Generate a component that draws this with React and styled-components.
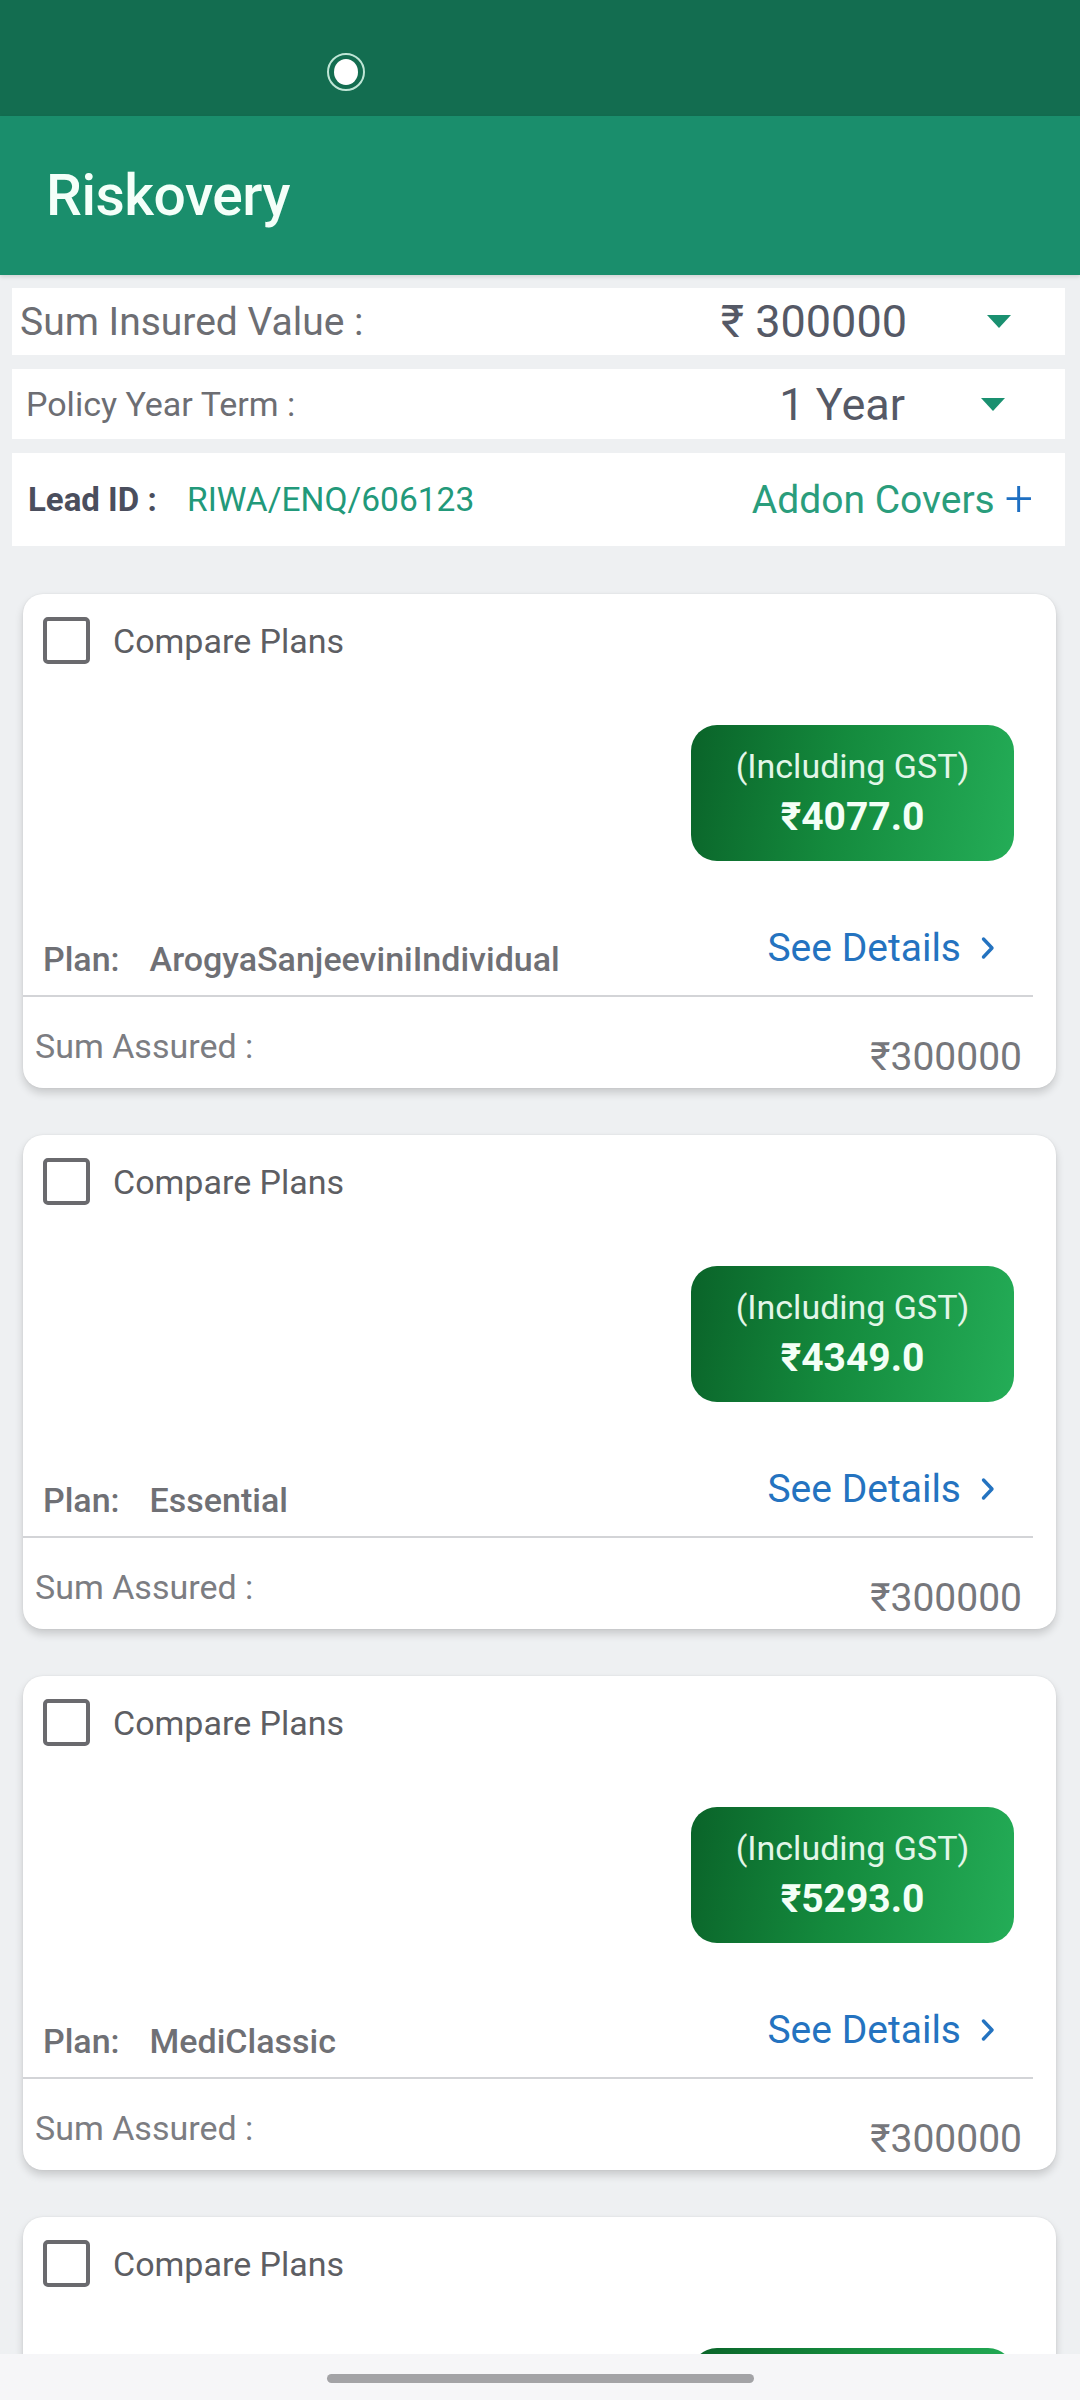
import React from "react";
import styled, { createGlobalStyle } from "styled-components";

const Global = createGlobalStyle`
  html, body { margin: 0; padding: 0; }
  body { background: #eef0f2; font-family: Roboto, "Noto Sans", "DejaVu Sans", sans-serif; }
  * { box-sizing: border-box; }
`;

const Screen = styled.div`
  width: 1080px;
  height: 2400px;
  display: flex;
  flex-direction: column;
  overflow: hidden;
  background: #eef0f2;
`;

const StatusBar = styled.div`
  height: 116px;
  flex: none;
  background: #136d50;
  display: flex;
  align-items: flex-start;
  padding: 53px 0 0 327px;
`;

const RecDot = styled.div`
  width: 38px;
  height: 38px;
  border-radius: 50%;
  border: 2px solid #bfe6d6;
  display: flex;
  align-items: center;
  justify-content: center;
  &::after {
    content: "";
    width: 24px;
    height: 26px;
    border-radius: 50%;
    background: #ffffff;
  }
`;

const AppBar = styled.div`
  height: 159px;
  flex: none;
  background: #1a8e6c;
  display: flex;
  align-items: center;
  padding-left: 46px;
  box-shadow: 0 2px 4px rgba(0, 0, 0, 0.12);
`;

const Title = styled.h1`
  margin: 0;
  color: #f4fff9;
  font-size: 57px;
  font-weight: 500;
  letter-spacing: -0.5px;
`;

const Content = styled.div`
  flex: 1;
  min-height: 0;
  overflow: hidden;
  padding: 13px 15px 0 12px;
  display: flex;
  flex-direction: column;
`;

const FilterRow = styled.div`
  flex: none;
  height: ${(p) => p.$h}px;
  margin-bottom: 14px;
  background: #fff;
  display: flex;
  align-items: center;
  padding-left: ${(p) => p.$pl}px;
  padding-right: ${(p) => p.$pr}px;
`;

const FilterLabel = styled.span`
  color: #6d6e73;
  font-size: ${(p) => p.$size}px;
  flex: 1;
`;

const FilterValue = styled.span`
  color: #555966;
  font-size: 45px;
  margin-right: ${(p) => p.$mr}px;
`;

const Caret = styled.span`
  width: 0;
  height: 0;
  border-left: 12px solid transparent;
  border-right: 12px solid transparent;
  border-top: 13px solid #1a9070;
`;

const LeadRow = styled.div`
  flex: none;
  height: 93px;
  background: #fff;
  display: flex;
  align-items: center;
  padding: 0 32px 0 16px;
  margin-bottom: 48px;
`;

const LeadLabel = styled.span`
  color: #4a4e5d;
  font-size: 33px;
  font-weight: 700;
  width: 159px;
`;

const LeadValue = styled.span`
  color: #22997a;
  font-size: 33.5px;
  flex: 1;
`;

const Addon = styled.span`
  color: #2a9d7c;
  font-size: 39px;
  display: flex;
  align-items: center;
  gap: 10px;
`;

const Plus = styled.span`
  color: #1e6fc2;
  font-size: 50px;
  font-weight: 300;
  line-height: 1;
  margin-top: -4px;
`;

const CardList = styled.div`
  flex: none;
  display: flex;
  flex-direction: column;
  gap: 47px;
  padding: 0 9px 0 11px;
`;

const Card = styled.div`
  background: #fff;
  border-radius: 20px;
  box-shadow: 0 5px 8px rgba(0, 0, 0, 0.16), 0 0 2px rgba(0, 0, 0, 0.08);
  height: 494px;
  flex: none;
  display: flex;
  flex-direction: column;
`;

const CompareRow = styled.label`
  display: flex;
  align-items: center;
  gap: 23px;
  padding: 23px 20px 0;
  height: 70px;
`;

const Checkbox = styled.span`
  width: 47px;
  height: 47px;
  border: 4px solid #6a6a6e;
  border-radius: 5px;
  flex: none;
`;

const CompareText = styled.span`
  color: #5d5e63;
  font-size: 34px;
`;

const PriceRow = styled.div`
  display: flex;
  justify-content: flex-end;
  padding-right: 42px;
  margin-top: 61px;
`;

const PriceBox = styled.div`
  width: 323px;
  height: 136px;
  border-radius: 26px;
  background: linear-gradient(100deg, #0a6329 0%, #148a3d 45%, #24ad57 100%);
  display: flex;
  flex-direction: column;
  align-items: center;
  justify-content: center;
  gap: 8px;
`;

const PriceNote = styled.span`
  color: #e3f6e8;
  font-size: 34px;
  line-height: 40px;
`;

const PriceValue = styled.span`
  color: #f3fff6;
  font-size: 39px;
  font-weight: 700;
  line-height: 46px;
`;

const DetailsRow = styled.div`
  height: 136px;
  display: flex;
  align-items: flex-end;
  justify-content: space-between;
  padding: 0 38px 20px 20px;
  border-bottom: 2px solid #d3d4d7;
  margin-right: 23px;
`;

const PlanText = styled.span`
  color: #6f7075;
  font-size: 34px;
  font-weight: 500;
  display: flex;
  gap: 30px;
  margin-bottom: -4px;
`;

const SeeDetails = styled.span`
  color: #2473c0;
  font-size: 39px;
  display: flex;
  align-items: center;
  gap: 20px;
  margin-bottom: 4px;
`;

const Footer = styled.div`
  flex: 1;
  display: flex;
  justify-content: space-between;
  padding: 0 34px 0 12px;
`;

const AssuredLabel = styled.span`
  color: #7c7d82;
  font-size: 34px;
  margin-top: 29px;
`;

const AssuredValue = styled.span`
  color: #76777c;
  font-size: 39px;
  margin-top: 37px;
`;

const NavBar = styled.div`
  height: 46px;
  flex: none;
  background: #f6f6f8;
  display: flex;
  justify-content: center;
  padding-top: 20px;
`;

const Handle = styled.div`
  width: 427px;
  height: 9px;
  border-radius: 5px;
  background: #a3a3a6;
`;

const Chevron = () => (
  <svg width="14" height="24" viewBox="0 0 14 24" fill="none">
    <path d="M2.5 3 L11 12 L2.5 21" stroke="#2473c0" strokeWidth="3.4" strokeLinecap="round" strokeLinejoin="round" />
  </svg>
);

const plans = [
  { name: "ArogyaSanjeeviniIndividual", price: "₹4077.0" },
  { name: "Essential", price: "₹4349.0" },
  { name: "MediClassic", price: "₹5293.0" },
  { name: "MediClassic", price: "₹5293.0" },
];

export default function App() {
  return (
    <Screen>
      <Global />
      <StatusBar>
        <RecDot />
      </StatusBar>
      <AppBar>
        <Title>Riskovery</Title>
      </AppBar>
      <Content>
        <FilterRow $h={67} $pl={8} $pr={54}>
          <FilterLabel $size={39}>Sum Insured Value :</FilterLabel>
          <FilterValue $mr={80}>₹ 300000</FilterValue>
          <Caret />
        </FilterRow>
        <FilterRow $h={70} $pl={14} $pr={60}>
          <FilterLabel $size={34}>Policy Year Term :</FilterLabel>
          <FilterValue $mr={76}>1 Year</FilterValue>
          <Caret />
        </FilterRow>
        <LeadRow>
          <LeadLabel>Lead ID :</LeadLabel>
          <LeadValue>RIWA/ENQ/606123</LeadValue>
          <Addon>
            Addon Covers <Plus>+</Plus>
          </Addon>
        </LeadRow>
        <CardList>
          {plans.map((p, i) => (
            <Card key={i}>
              <CompareRow>
                <Checkbox />
                <CompareText>Compare Plans</CompareText>
              </CompareRow>
              <PriceRow>
                <PriceBox>
                  <PriceNote>(Including GST)</PriceNote>
                  <PriceValue>{p.price}</PriceValue>
                </PriceBox>
              </PriceRow>
              <DetailsRow>
                <PlanText>
                  <span>Plan:</span>
                  <span>{p.name}</span>
                </PlanText>
                <SeeDetails>
                  See Details <Chevron />
                </SeeDetails>
              </DetailsRow>
              <Footer>
                <AssuredLabel>Sum Assured :</AssuredLabel>
                <AssuredValue>₹300000</AssuredValue>
              </Footer>
            </Card>
          ))}
        </CardList>
      </Content>
      <NavBar>
        <Handle />
      </NavBar>
    </Screen>
  );
}
